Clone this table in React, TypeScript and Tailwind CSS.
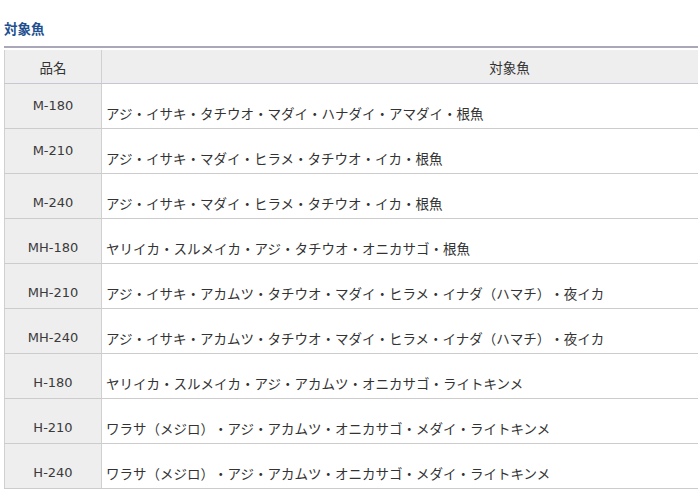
import React from "react";

const rows: { name: string; fish: string; early?: boolean }[] = [
  { name: "M-180", fish: "アジ・イサキ・タチウオ・マダイ・ハナダイ・アマダイ・根魚", early: true },
  { name: "M-210", fish: "アジ・イサキ・マダイ・ヒラメ・タチウオ・イカ・根魚", early: true },
  { name: "M-240", fish: "アジ・イサキ・マダイ・ヒラメ・タチウオ・イカ・根魚" },
  { name: "MH-180", fish: "ヤリイカ・スルメイカ・アジ・タチウオ・オニカサゴ・根魚" },
  { name: "MH-210", fish: "アジ・イサキ・アカムツ・タチウオ・マダイ・ヒラメ・イナダ（ハマチ）・夜イカ" },
  { name: "MH-240", fish: "アジ・イサキ・アカムツ・タチウオ・マダイ・ヒラメ・イナダ（ハマチ）・夜イカ" },
  { name: "H-180", fish: "ヤリイカ・スルメイカ・アジ・アカムツ・オニカサゴ・ライトキンメ" },
  { name: "H-210", fish: "ワラサ（メジロ）・アジ・アカムツ・オニカサゴ・メダイ・ライトキンメ" },
  { name: "H-240", fish: "ワラサ（メジロ）・アジ・アカムツ・オニカサゴ・メダイ・ライトキンメ" },
];

const latin = { fontFamily: '"DejaVu Sans", "Noto Sans CJK JP", sans-serif' };
const jp = { fontFamily: '"Noto Sans CJK JP", sans-serif' };

export default function App() {
  return (
    <div
      className="w-[698px] h-[500px] overflow-hidden bg-white text-[#333333] [text-spacing-trim:space-all]"
      style={jp}
    >
      <div className="pl-[4px] pt-[19px] w-[917px]">
        <h2 className="text-[13.5px] font-bold text-[#22508f] leading-[18px] pb-[9px] border-b-2 border-[#aaa8b8]">
          対象魚
        </h2>
        <div className="mt-[2px]">
          <div className="flex h-[34px] border-b border-[#c8c6d2] bg-[#eeeeee] text-[13.5px] leading-[18px]">
            <div className="w-[98px] border-l border-r border-[#d0d0d0] flex items-center justify-center pt-[1px]">
              品名
            </div>
            <div className="flex-1 flex items-center justify-center pt-[1px]">対象魚</div>
          </div>
          {rows.map((r) => (
            <div key={r.name} className="flex h-[45px] border-b border-[#cccccc]">
              <div
                className={
                  "w-[98px] border-l border-r border-[#d0d0d0] bg-[#eeeeee] text-center text-[13px] leading-[18px] text-[#3a3a3a] " +
                  (r.early ? "pt-[13px]" : "pt-[20px]")
                }
                style={latin}
              >
                {r.name}
              </div>
              <div className="flex-1 pl-[4px] pt-[20px] text-[13.5px] leading-[18px]">{r.fish}</div>
            </div>
          ))}
        </div>
      </div>
    </div>
  );
}
